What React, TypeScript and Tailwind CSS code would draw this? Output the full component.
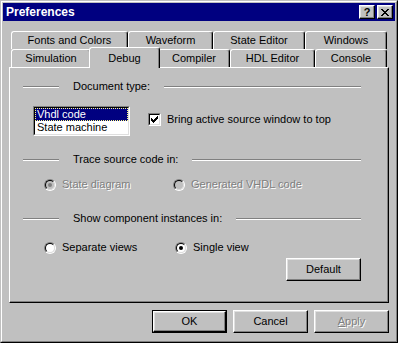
import React from 'react';

interface TabDef {
  label: string;
  width: string;
}

const backTabs: TabDef[] = [
  { label: 'Fonts and Colors', width: 'w-[117px]' },
  { label: 'Waveform', width: 'w-[85px]' },
  { label: 'State Editor', width: 'w-[92px]' },
  { label: 'Windows', width: 'w-[82px]' },
];

const raised = 'border border-t-white border-l-white border-r-black border-b-black shadow-[inset_-1px_-1px_#808080,inset_1px_1px_#dfdfdf]';
const sunken = 'border border-t-[#808080] border-l-[#808080] border-r-white border-b-white';
const disabledText = 'text-[#808080] [text-shadow:1px_1px_0_#fff]';

const Tab: React.FC<{ label: string; className?: string }> = ({ label, className = '' }) => (
  <div
    className={`h-[18px] flex items-center justify-center border-l border-t border-r border-l-white border-t-white border-r-black rounded-t-[3px] shadow-[inset_-1px_0_#808080] ${className}`}
  >
    {label}
  </div>
);

const GroupLabel: React.FC<{ label: string }> = ({ label }) => (
  <div className="flex items-center h-[13px] ml-[13px] mr-[27px]">
    <div className="w-[36px] h-[2px] border-t border-t-[#808080] border-b border-b-white" />
    <span className="px-[14px] leading-[13px] whitespace-nowrap">{label}</span>
    <div className="flex-1 h-[2px] border-t border-t-[#808080] border-b border-b-white" />
  </div>
);

const Radio: React.FC<{ label: string; checked?: boolean; disabled?: boolean }> = ({ label, checked, disabled }) => (
  <div className="flex items-center h-[13px]">
    <div className="w-[12px] h-[12px] rounded-full border border-t-[#808080] border-l-[#808080] border-r-white border-b-white">
      <div
        className={`w-full h-full rounded-full border border-t-black border-l-black border-r-[#dfdfdf] border-b-[#dfdfdf] flex items-center justify-center ${
          disabled ? 'bg-[#c0c0c0]' : 'bg-white'
        }`}
      >
        {checked && <div className={`w-[4px] h-[4px] rounded-full ${disabled ? 'bg-[#808080]' : 'bg-black'}`} />}
      </div>
    </div>
    <span className={`ml-[6px] leading-[13px] ${disabled ? disabledText : ''}`}>{label}</span>
  </div>
);

const Button: React.FC<{ label: React.ReactNode; isDefault?: boolean; disabled?: boolean }> = ({ label, isDefault, disabled }) => {
  if (isDefault) {
    return (
      <div className="w-[75px] h-[23px] border border-black">
        <div className={`w-full h-full flex items-center justify-center ${raised}`}>{label}</div>
      </div>
    );
  }
  return (
    <div className={`w-[75px] h-[23px] flex items-center justify-center ${raised} ${disabled ? disabledText : ''}`}>
      {label}
    </div>
  );
};

const CheckMark = () => (
  <svg width="7" height="7" viewBox="0 0 7 7" shapeRendering="crispEdges">
    <path d="M6 0h1v1h-1z M5 1h2v1h-2z M0 2h1v1h-1z M4 2h3v1h-3z M0 3h2v1h-2z M3 3h3v1h-3z M0 4h5v1h-5z M1 5h3v1h-3z M2 6h1v1h-1z" fill="#000" />
  </svg>
);

const CloseGlyph = () => (
  <svg width="8" height="7" viewBox="0 0 8 7" shapeRendering="crispEdges">
    <path d="M0 0h2v1h-2z M6 0h2v1h-2z M1 1h2v1h-2z M5 1h2v1h-2z M2 2h4v1h-4z M3 3h2v1h-2z M2 4h4v1h-4z M1 5h2v1h-2z M5 5h2v1h-2z M0 6h2v1h-2z M6 6h2v1h-2z" fill="#000" />
  </svg>
);

const App: React.FC = () => {
  return (
    <div className="w-[398px] h-[343px] bg-[#c0c0c0] text-black text-[11px] font-['Liberation_Sans',Arial,sans-serif] border border-t-[#c0c0c0] border-l-[#c0c0c0] border-r-black border-b-black">
      <div className="w-full h-full border border-t-white border-l-white border-r-[#808080] border-b-[#808080] p-[1px]">
        {/* title bar */}
        <div className="h-[18px] bg-[#000080] flex items-center pl-[3px] pr-[2px]">
          <span className="text-white font-bold text-[12px] leading-none">Preferences</span>
          <div className="ml-auto flex gap-[2px]">
            <div className={`w-[16px] h-[14px] flex items-center justify-center bg-[#c0c0c0] ${raised}`}>
              <span className="font-bold text-[11px] leading-none">?</span>
            </div>
            <div className={`w-[16px] h-[14px] flex items-center justify-center bg-[#c0c0c0] ${raised}`}>
              <CloseGlyph />
            </div>
          </div>
        </div>

        <div className="ml-[6px] w-[380px]">
          {/* tabs */}
          <div className="mt-[10px] pl-[2px]">
            <div className="flex">
              {backTabs.map((t) => (
                <Tab key={t.label} label={t.label} className={t.width} />
              ))}
            </div>
            <div className="flex items-end h-[18px]">
              <Tab label="Simulation" className="w-[80px]" />
              <div className="relative z-10 -mx-[2px] w-[71px] h-[21px] -mb-[1px] bg-[#c0c0c0] flex justify-center pt-[2px] border-l border-t border-r border-l-white border-t-white border-r-black rounded-t-[3px] shadow-[inset_-1px_0_#808080]">
                Debug
              </div>
              <Tab label="Compiler" className="w-[72px]" />
              <Tab label="HDL Editor" className="w-[85px]" />
              <Tab label="Console" className="w-[72px]" />
            </div>
          </div>

          {/* panel */}
          <div className="h-[236px] border border-t-white border-l-white border-r-black border-b-black shadow-[inset_-1px_-1px_#808080] flex flex-col">
            <div className="mt-[12px]">
              <GroupLabel label="Document type:" />
            </div>

            <div className="mt-[13px] ml-[23px] flex items-start">
              <div className={`w-[97px] h-[30px] ${sunken}`}>
                <div className="w-full h-full border border-t-black border-l-black border-r-[#dfdfdf] border-b-[#dfdfdf] bg-white">
                  <div className="h-[13px] bg-[#000080] text-white leading-[11px] border border-dotted border-[#ffff80] pl-[1px]">
                    Vhdl code
                  </div>
                  <div className="h-[13px] leading-[13px] pl-[2px]">State machine</div>
                </div>
              </div>
              <div className="ml-[18px] mt-[7px] flex items-center">
                <div className={`w-[13px] h-[13px] ${sunken}`}>
                  <div className="w-full h-full bg-white border border-t-black border-l-black border-r-[#dfdfdf] border-b-[#dfdfdf] flex items-center justify-center">
                    <CheckMark />
                  </div>
                </div>
                <span className="ml-[6px] leading-[13px]">Bring active source window to top</span>
              </div>
            </div>

            <div className="mt-[17px]">
              <GroupLabel label="Trace source code in:" />
            </div>

            <div className="mt-[12px] ml-[34px] flex">
              <div className="w-[129px]">
                <Radio label="State diagram" checked disabled />
              </div>
              <Radio label="Generated VHDL code" disabled />
            </div>

            <div className="mt-[21px]">
              <GroupLabel label="Show component instances in:" />
            </div>

            <div className="mt-[16px] ml-[34px] flex">
              <div className="w-[131px]">
                <Radio label="Separate views" />
              </div>
              <Radio label="Single view" checked />
            </div>

            <div className="mt-[4px] mr-[27px] flex justify-end">
              <Button label="Default" />
            </div>
          </div>

          {/* dialog buttons */}
          <div className="mt-[7px] flex justify-end gap-[6px]">
            <Button label="OK" isDefault />
            <Button label="Cancel" />
            <Button
              label={
                <span>
                  <span className="underline">A</span>pply
                </span>
              }
              disabled
            />
          </div>
        </div>
      </div>
    </div>
  );
};

export default App;
